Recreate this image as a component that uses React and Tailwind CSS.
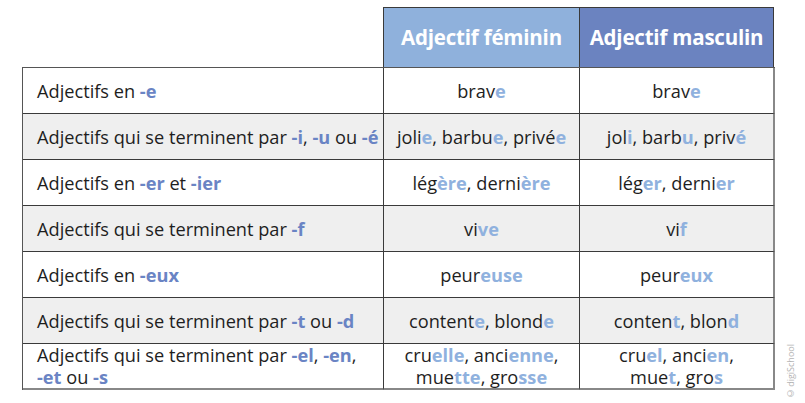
import React from "react";

const D = ({ children }) => <span className="font-bold text-[#6a84c4]">{children}</span>;
const L = ({ children }) => <span className="font-bold text-[#8fb1de]">{children}</span>;

const rows = [
  {
    label: <>Adjectifs en <D>-e</D></>,
    fem: <>brav<L>e</L></>,
    mas: <>brav<L>e</L></>,
  },
  {
    label: <>Adjectifs qui se terminent par <D>-i</D>, <D>-u</D> ou <D>-é</D></>,
    fem: <>joli<L>e</L>, barbu<L>e</L>, privé<L>e</L></>,
    mas: <>jol<L>i</L>, barb<L>u</L>, priv<L>é</L></>,
  },
  {
    label: <>Adjectifs en <D>-er</D> et <D>-ier</D></>,
    fem: <>lég<L>ère</L>, derni<L>ère</L></>,
    mas: <>lég<L>er</L>, derni<L>er</L></>,
  },
  {
    label: <>Adjectifs qui se terminent par <D>-f</D></>,
    fem: <>vi<L>ve</L></>,
    mas: <>vi<L>f</L></>,
  },
  {
    label: <>Adjectifs en <D>-eux</D></>,
    fem: <>peur<L>euse</L></>,
    mas: <>peur<L>eux</L></>,
  },
  {
    label: <>Adjectifs qui se terminent par <D>-t</D> ou <D>-d</D></>,
    fem: <>content<L>e</L>, blond<L>e</L></>,
    mas: <>conten<L>t</L>, blon<L>d</L></>,
  },
  {
    label: <>Adjectifs qui se terminent par <D>-el</D>, <D>-en</D>,<br /><D>-et</D> ou <D>-s</D></>,
    fem: <>cru<L>elle</L>, anci<L>enne</L>,<br />mue<L>tte</L>, gro<L>sse</L></>,
    mas: <>cru<L>el</L>, anci<L>en</L>,<br />mue<L>t</L>, gro<L>s</L></>,
  },
];

export default function App() {
  return (
    <div className="w-[805px] h-[403px] bg-white flex items-end font-['Open_Sans',sans-serif] text-[#1e1e1e]">
      <div className="self-start pl-[22px] pt-[7px]">
        <div className="flex">
          <div className="w-[361px]" />
          <div className="w-[196px] h-[60px] bg-[#8fb1dc] border-t border-l border-[#3a3a3a] flex items-center justify-center text-white font-bold text-[20.5px] tracking-[-0.2px]">
            Adjectif féminin
          </div>
          <div className="w-[195px] h-[60px] bg-[#6b83c0] border-t border-l border-r border-[#3a3a3a] flex items-center justify-center text-white font-bold text-[20.5px] tracking-[-0.2px]">
            Adjectif masculin
          </div>
        </div>
        <div className="grid grid-cols-[361px_196px_195px] border-t border-l border-[#555] text-[18.2px] leading-[22px]">
          {rows.map((r, i) => {
            const bg = i % 2 === 1 ? "bg-[#efefef]" : "bg-white";
            const last = i === rows.length - 1;
            const bb = last ? "border-b-2 border-b-[#888]" : "border-b border-b-[#3a3a3a]";
            return (
              <React.Fragment key={i}>
                <div className={`${bg} ${bb} h-[46px] border-r border-r-[#3a3a3a] flex items-center pl-[14px] whitespace-nowrap`}>
                  <div>{r.label}</div>
                </div>
                <div className={`${bg} ${bb} h-[46px] border-r border-r-[#3a3a3a] flex items-center justify-center text-center whitespace-nowrap`}>
                  <div>{r.fem}</div>
                </div>
                <div className={`${bg} ${bb} h-[46px] border-r-2 border-r-[#888] flex items-center justify-center text-center whitespace-nowrap`}>
                  <div>{r.mas}</div>
                </div>
              </React.Fragment>
            );
          })}
        </div>
      </div>
      <div className="ml-[11px] mb-[3px] [writing-mode:vertical-rl] rotate-180 text-[9px] leading-[10px] text-[#b5b5b5]">
        ©digiSchool
      </div>
    </div>
  );
}
